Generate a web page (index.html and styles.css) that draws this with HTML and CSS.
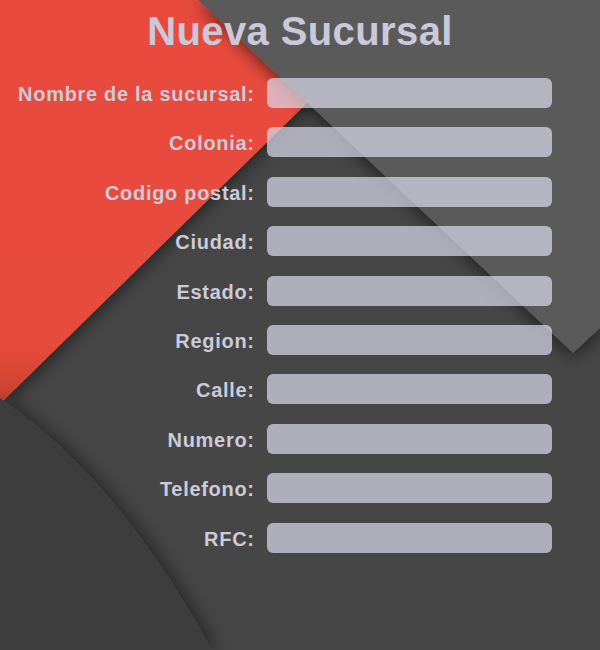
FILE: index.html
```html
<!DOCTYPE html>
<html lang="es">
<head>
<meta charset="utf-8">
<title>Nueva Sucursal</title>
<link rel="stylesheet" href="styles.css">
</head>
<body>
<div class="screen">
  <svg class="backdrop" width="600" height="650" viewBox="0 0 600 650" aria-hidden="true">
    <defs>
      <filter id="shadow" x="-30%" y="-30%" width="160%" height="160%">
        <feDropShadow dx="0" dy="3" stdDeviation="9" flood-color="#000" flood-opacity="0.6"/>
      </filter>
      <filter id="shadowCurve" x="-30%" y="-30%" width="160%" height="160%">
        <feDropShadow dx="5" dy="0" stdDeviation="9" flood-color="#000" flood-opacity="0.45"/>
      </filter>
      <linearGradient id="redGrad" x1="0" y1="0" x2="0" y2="1">
        <stop offset="0" stop-color="#e84c3d"/>
        <stop offset="0.85" stop-color="#e74c3c"/>
        <stop offset="1" stop-color="#c9412f"/>
      </linearGradient>
    </defs>
    <rect x="0" y="0" width="600" height="650" fill="#464646"/>
    <polygon points="0,0 412,0 0,404" fill="url(#redGrad)" filter="url(#shadow)"/>
    <polygon points="198,0 600,0 600,328 573,353" fill="#5a5a5a" filter="url(#shadow)"/>
    <path d="M0,398 Q120,480 212,650 L0,650 Z" fill="#3e3e3e" filter="url(#shadowCurve)"/>
  </svg>

  <main class="panel">
    <h1 class="title">Nueva Sucursal</h1>
    <form class="form">
      <label class="label" for="f1">Nombre de la sucursal:</label>
      <input class="field" id="f1" type="text">
      <label class="label" for="f2">Colonia:</label>
      <input class="field" id="f2" type="text">
      <label class="label" for="f3">Codigo postal:</label>
      <input class="field" id="f3" type="text">
      <label class="label" for="f4">Ciudad:</label>
      <input class="field" id="f4" type="text">
      <label class="label" for="f5">Estado:</label>
      <input class="field" id="f5" type="text">
      <label class="label" for="f6">Region:</label>
      <input class="field" id="f6" type="text">
      <label class="label" for="f7">Calle:</label>
      <input class="field" id="f7" type="text">
      <label class="label" for="f8">Numero:</label>
      <input class="field" id="f8" type="text">
      <label class="label" for="f9">Telefono:</label>
      <input class="field" id="f9" type="text">
      <label class="label" for="f10">RFC:</label>
      <input class="field" id="f10" type="text">
    </form>
  </main>
</div>
</body>
</html>
```

FILE: styles.css
```css
html, body {
  margin: 0;
  padding: 0;
  width: 600px;
  height: 650px;
  overflow: hidden;
  background: #464646;
}

.screen {
  position: relative;
  width: 600px;
  height: 650px;
  overflow: hidden;
  font-family: "Liberation Sans", Arial, sans-serif;
}

.backdrop {
  position: absolute;
  left: 0;
  top: 0;
  display: block;
}

.panel {
  position: relative;
  display: flex;
  flex-direction: column;
  align-items: center;
  padding-top: 7px;
}

.title {
  margin: 0;
  font-size: 40px;
  line-height: 48px;
  font-weight: bold;
  letter-spacing: 0.4px;
  color: #c9c9d9;
}

.form {
  margin: 23px 0 0 0;
  align-self: flex-start;
  display: grid;
  grid-template-columns: 254px 285px;
  grid-auto-rows: 30px;
  column-gap: 13px;
  row-gap: 19.4px;
}

.label {
  align-self: center;
  text-align: right;
  white-space: nowrap;
  font-size: 20px;
  font-weight: bold;
  letter-spacing: 0.7px;
  line-height: 30px;
  padding-top: 2px;
  margin-right: -0.7px;
  color: #cbcbd9;
}

.field {
  box-sizing: border-box;
  width: 285px;
  height: 30px;
  margin: 0;
  padding: 0 10px;
  border: none;
  border-radius: 6px;
  background: rgba(219, 219, 236, 0.7);
  outline: none;
  font-family: inherit;
  font-size: 16px;
}
```
